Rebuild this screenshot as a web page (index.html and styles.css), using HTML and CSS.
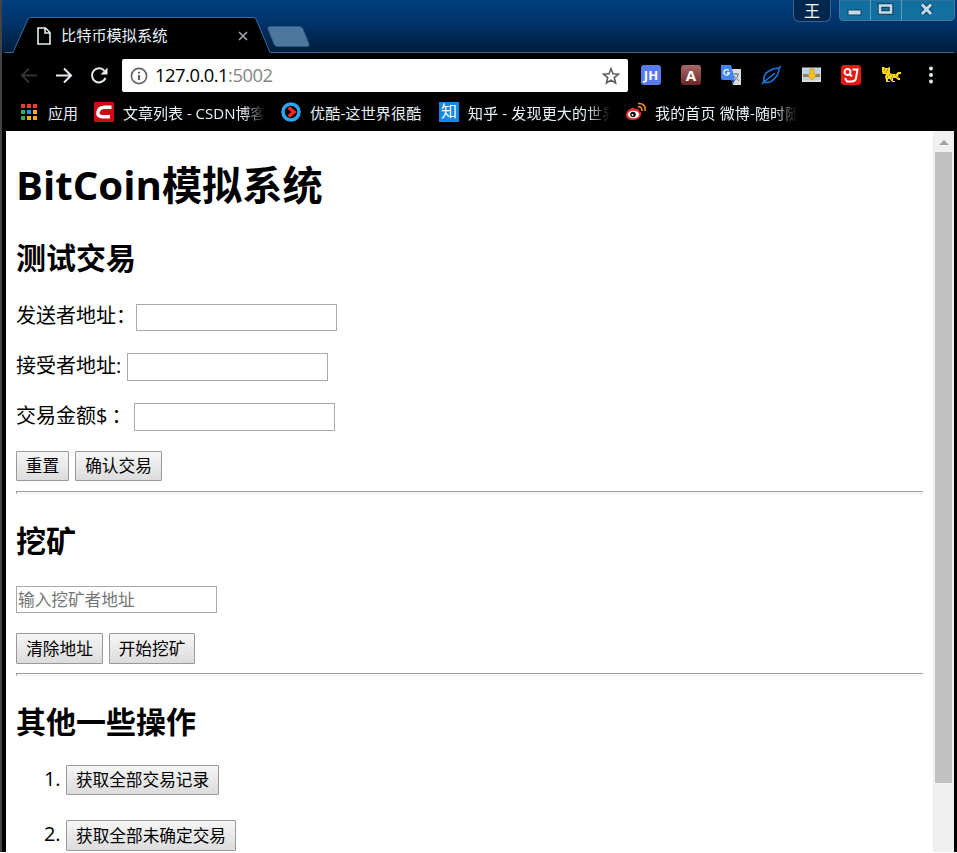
FILE: index.html
```html
<!DOCTYPE html>
<html lang="zh-CN">
<head>
<meta charset="utf-8">
<title>比特币模拟系统</title>
<link rel="stylesheet" href="styles.css">
</head>
<body>
<div class="window">
  <header class="titlebar">
    <svg class="tab-shape" width="320" height="53" viewBox="0 0 320 53">
      <path d="M5 52.5H13L28 19Q29 17.500 31 17.500H253Q255 17.500 256 19L270 52.500H320" fill="none" stroke="#3f6b98"/>
      <path d="M13.500 53L28.500 19.500Q29.500 18 31 18H253Q254.500 18 255.500 19.500L269.500 53Z" fill="#000"/>
      <path d="M270 26.500H299Q302 26.500 303 29L309 44Q310 46.500 307 46.500H278Q275 46.500 274 44L268 29Q267 26.500 270 26.500Z" fill="#4c779f" stroke="#2c5986"/>
    </svg>
    <div class="tab">
      <svg class="doc" width="14" height="18" viewBox="0 0 14 18" fill="none" stroke="#e4eef0" stroke-width="1.600"><path d="M1 1H8.500L13 5.500V17H1ZM8 1V6H13"/></svg>
      <span class="tab-title">比特币模拟系统</span>
      <svg class="tab-close" width="10" height="10" viewBox="0 0 10 10" stroke="#a5b0b5" stroke-width="1.500"><path d="M1 1L9 9M9 1L1 9"/></svg>
    </div>
    <div class="user">王</div>
    <div class="controls">
      <svg width="116" height="22" viewBox="0 0 116 22">
        <path d="M.5 0V17Q.5 20.500 4 20.500H111Q115.500 20.500 115.500 16V0Z" fill="#126fa0" stroke="#49789b"/>
        <path d="M31.500 0V20M62.500 0V20" stroke="#5c9cbd"/>
        <rect x="9" y="10" width="13" height="5" fill="#c3dbe8" stroke="#154663"/>
        <path d="M41 5.500H52V12.500H41Z" fill="none" stroke="#154663" stroke-width="5"/>
        <path d="M41 5.500H52V12.500H41Z" fill="none" stroke="#c3dbe8" stroke-width="2.500"/>
        <path d="M83 4.500L92 14M92 4.500L83 14" stroke="#154663" stroke-width="5"/>
        <path d="M83 4.500L92 14M92 4.500L83 14" stroke="#c3dbe8" stroke-width="3"/>
      </svg>
    </div>
  </header>

  <nav class="toolbar">
    <svg class="nav" width="110" height="40" viewBox="0 0 110 40" fill="none" stroke-width="2">
      <path d="M37 22.500H22M29 15.500L22 22.500L29 29.500" stroke="#333"/>
      <path d="M56 22.500H71M64 15.500L71 22.500L64 29.500" stroke="#e4eef0"/>
      <path d="M104.500 18A7 7 0 1 0 105.500 25" stroke="#e4eef0"/>
      <path d="M107.500 14.500V21.500H100.500Z" fill="#e4eef0"/>
    </svg>
    <div class="address">
      <svg width="18" height="18" viewBox="0 0 18 18" fill="none" stroke="#5f6266" stroke-width="1.600"><circle cx="9" cy="9" r="7.600"/><path d="M9 8V13M9 4.700V6.500" stroke-width="2"/></svg>
      <span class="url">127.0.0.1<span class="port">:5002</span></span>
      <svg class="star" width="18" height="18" viewBox="0 0 18 18" fill="none" stroke="#5b5e61" stroke-width="1.600"><path d="M9 1.800L11 6.700L16.500 7.100L12.300 10.600L13.600 16L9 13.100L4.400 16L5.700 10.600L1.500 7.100L7 6.700Z"/></svg>
    </div>
    <div class="extensions">
      <span class="ext jh">JH</span>
      <span class="ext acro">A</span>
      <svg width="20" height="20" viewBox="0 0 20 20"><path d="M8 4H20V20H12Z" fill="#ddd"/><path d="M12 9H18M15 8V10M13 16Q17 13 17 9M13 11L18 16" stroke="#697a84" fill="none"/><path d="M0 0H10L14 15H2Q0 15 0 13Z" fill="#4285f4"/><path d="M10 15H14L12 19Z" fill="#2455b5"/><path d="M7.700 5.700A2.700 2.700 0 1 0 8.200 8H6" fill="none" stroke="#fff" stroke-width="1.300"/></svg>
      <svg width="20" height="20" viewBox="0 0 20 20" fill="none" stroke="#197ce4" stroke-width="1.500"><path d="M3 17Q2 9 8 6Q13 3 18 3Q18 9 14 13Q9 19 3 17M1 18.500L14 8M17 4L20 1M3 17L1 19"/></svg>
      <svg width="20" height="20" viewBox="0 0 20 20"><path d="M1 2.500H20V17H1Z" fill="#ddd"/><path d="M2 3.500H19V10H2Z" fill="#b6d4e4"/><path d="M2 9H19V12H2Z" fill="#8b806b"/><path d="M2 12H19V15H2Z" fill="#c6d1cc"/><path d="M9 4H13V9H16L11 15L6 9H9Z" fill="#f5c51c" stroke="#c18d18" stroke-width=".6"/></svg>
      <svg width="20" height="20" viewBox="0 0 20 20"><rect width="20" height="20" rx="3" fill="#e41912"/><g fill="none" stroke="#fff" stroke-width="1.900"><circle cx="6.500" cy="7" r="3"/><path d="M8.500 9L11 11.500M11.500 4.500H16.500L15 13Q14.500 16.500 10 16.500H6L4 13"/></g></svg>
      <svg width="20" height="20" viewBox="0 0 20 20"><path d="M1 2H3L4 3H7L8 2H9V8L11 9H15L17 7H20V9H18L17 11L18 13H19V15H17L15 13H12V16H14V17H11L9 14H7V16H9V17H5V15L4 12L5 9L2 9L1 7Z" fill="#f8d91b"/><path d="M3 5H4M6 5H7M5 7H6M8 10H9M11 11H12M14 10H15M6 12H7M10 13H11M16 12H17" stroke="#704600"/></svg>
      <svg width="20" height="20" viewBox="0 0 20 20" fill="#e4eef0"><circle cx="10" cy="3.500" r="2"/><circle cx="10" cy="10" r="2"/><circle cx="10" cy="16.500" r="2"/></svg>
    </div>
  </nav>

  <nav class="bookmarks">
    <div class="bm apps">
      <svg width="17" height="17" viewBox="0 0 17 17"><path d="M0 0H4V4H0ZM6 0H10V4H6ZM12 0H16V4H12Z" fill="#f23b30"/><path d="M0 6H4V10H0ZM0 12H4V16H0Z" fill="#35a853"/><path d="M6 6H10V10H6Z" fill="#2b8cff"/><path d="M12 6H16V10H12ZM6 12H10V16H6ZM12 12H16V16H12Z" fill="#fbad18"/></svg>
      <span>应用</span>
    </div>
    <div class="bm csdn">
      <svg width="20" height="20" viewBox="0 0 20 20"><path d="M0 0H20V20H0Z" fill="#ca0c16"/><path d="M17.500 5.200H11Q5 5.200 4 10Q3 14.800 9 14.800H16" fill="none" stroke="#fff" stroke-width="3.400"/></svg>
      <span class="fade">文章列表 - CSDN博客</span>
    </div>
    <div class="bm youku">
      <svg width="20" height="20" viewBox="0 0 20 20" fill="none"><circle cx="10" cy="10" r="8" stroke="#2aa7f2" stroke-width="3.500"/><path d="M7.500 5.500L13 10L7.500 14.500" stroke="#fb2424" stroke-width="3.500"/></svg>
      <span>优酷-这世界很酷</span>
    </div>
    <div class="bm zhihu">
      <span class="zhi">知</span>
      <span class="fade">知乎 - 发现更大的世界</span>
    </div>
    <div class="bm weibo">
      <svg width="20" height="20" viewBox="0 0 20 20"><path d="M0 13Q0 8 6 6Q9 5 9 7Q13 6 13 9Q16 10 15 13Q13 18 7 18Q0 18 0 13Z" fill="#e52b30"/><ellipse cx="7.500" cy="12.500" rx="5.600" ry="3.800" fill="#fff"/><circle cx="7" cy="12.500" r="2.800" fill="#111"/><circle cx="6.500" cy="13" r=".9" fill="#fff"/><path d="M12 5Q16 4 16 9M12 1.500Q20 1 19 9" fill="none" stroke="#f7931e" stroke-width="1.500"/></svg>
      <span class="fade">我的首页 微博-随时随</span>
    </div>
  </nav>

  <div class="viewport">
    <main class="page">
      <h1>BitCoin模拟系统</h1>
      <h2>测试交易</h2>
      <form>
        <div class="row"><label class="sender" for="s">发送者地址：</label><input id="s" type="text"></div>
        <div class="row"><label class="receiver" for="r">接受者地址:</label><input id="r" type="text"></div>
        <div class="row"><label class="amount" for="a">交易金额$<span class="colon">：</span></label><input id="a" type="text"></div>
        <div class="actions"><button class="w2" type="button">重置</button><button class="w4" type="button">确认交易</button></div>
      </form>
      <hr>
      <h2 class="mining">挖矿</h2>
      <form>
        <div class="row miner"><input type="text" placeholder="输入挖矿者地址"></div>
        <div class="actions mine-actions"><button class="w4" type="button">清除地址</button><button class="w4b" type="button">开始挖矿</button></div>
      </form>
      <hr>
      <h2 class="others">其他一些操作</h2>
      <ol>
        <li><span class="num">1.</span><button class="w8" type="button">获取全部交易记录</button></li>
        <li><span class="num">2.</span><button class="w9" type="button">获取全部未确定交易</button></li>
      </ol>
    </main>
    <div class="scrollbar"><div class="arrow"></div><div class="thumb"></div></div>
  </div>
</div>
</body>
</html>
```
FILE: styles.css
```css
* { box-sizing: border-box; }
body { margin: 0; overflow: hidden; font-family: "Open Sans", "Noto Sans CJK SC", sans-serif; }
svg { display: block; flex: none; }
.window { width: 957px; height: 852px; background: #000; border-left: 2px solid #444; overflow: hidden; }
.titlebar { position: relative; display: flex; height: 53px; background: linear-gradient(#003f80, #003368 45%, #001c3b); }
.tab-shape { position: absolute; left: -2px; top: 0; }
.titlebar::after { content: ""; position: absolute; left: 318px; right: 3px; bottom: 0; height: 1px; background: #3f6589; }
.tab { position: relative; display: flex; align-items: center; width: 252px; height: 34px; margin-top: 19px; padding-left: 35px; color: #e9f4f8; }
.tab-title { margin-left: 10px; padding-bottom: 2px; font-size: 15.2px; line-height: 32px; }
.tab-close { margin-left: auto; margin-right: 6px; }
.user { width: 38px; height: 22px; margin-left: 539px; border: 1px solid #3a628c; border-top: 0; border-radius: 0 0 6px 6px; background: #00274f; color: #fff; font-size: 16px; line-height: 22px; text-align: center; }
.controls { margin-left: 8px; }
.toolbar { display: flex; height: 43px; }
.nav { margin-left: -2px; }
.address { display: flex; align-items: center; width: 506px; height: 33px; margin: 6px 0 0 12px; padding: 0 8px; background: #fff; border-radius: 2px; }
.url { margin-left: 7px; padding-bottom: 2px; font-size: 18.4px; line-height: 30px; letter-spacing: -.5px; }
.port { color: #858585; }
.star { margin-left: auto; }
.extensions { display: flex; gap: 20px; margin: 12px 0 0 13px; }
.ext { width: 20px; height: 20px; border-radius: 3px; color: #fff; text-align: center; line-height: 20px; font-weight: 700; }
.jh { background: #587bed; font-size: 13px; }
.acro { background: linear-gradient(#a76b6b, #6e2525); font-size: 15px; }
.bookmarks { display: flex; align-items: center; height: 35px; padding-bottom: 3px; color: #e9f4f8; font-size: 15px; line-height: 26px; white-space: nowrap; }
.bm { display: flex; align-items: center; flex: none; }
.bm > span:not(.zhi) { padding-top: 1px; }
.apps { width: 92px; padding-left: 19px; gap: 10px; }
.csdn { width: 187px; gap: 9px; }
.youku { width: 158px; gap: 9px; letter-spacing: .2px; }
.zhihu { width: 187px; gap: 9px; }
.weibo { gap: 9px; }
.zhihu .fade, .weibo .fade { letter-spacing: .15px; }
.fade { width: 142px; overflow: hidden; -webkit-mask-image: linear-gradient(to right, #000 84%, transparent); mask-image: linear-gradient(to right, #000 84%, transparent); }
.zhi { width: 20px; height: 20px; background: #0f88eb; color: #fff; line-height: 19px; text-align: center; font-size: 16px; }
.viewport { display: flex; width: 948px; height: 721px; margin-left: 4px; background: #fff; }
.page { width: 927px; height: 721px; padding: 0 10px; font-size: 20px; overflow: hidden; }
h1 { margin: 28px 0 0; font-size: 40.2px; line-height: 52px; height: 52px; font-weight: 700; }
h2 { margin: 27px 0 0; font-size: 30px; line-height: 40px; height: 40px; font-weight: 700; }
form { margin: 0; }
.row { display: flex; height: 28px; margin-bottom: 22px; align-items: flex-start; }
h2 + form { padding-top: 26px; }
label { line-height: 24px; white-space: nowrap; }
.sender { width: 120px; }
.receiver { width: 111px; line-height: 26px; }
.amount { width: 118px; line-height: 26px; }
.colon { margin-left: 4px; }
input { width: 201px; height: 27px; margin: 0; border: 1px solid #a9a9a9; padding: 1px; background: #fff; border-radius: 0; font: 16.67px/22px "Open Sans", "Noto Sans CJK SC", sans-serif; }
input::placeholder { color: #757575; }
.row:nth-child(2) input, .row:nth-child(3) input { height: 28px; }
.row:nth-child(2) { margin-top: -1px; }
.actions { display: flex; gap: 6px; height: 30px; margin-top: -2px; }
button { height: 30px; padding: 0; border: 1px solid #999; border-radius: 1px; background: linear-gradient(#f6f6f6, #dcdcdc); color: #000; font: 16.67px/26px "Open Sans", "Noto Sans CJK SC", sans-serif; white-space: nowrap; }
.w2 { width: 53px; } .w4 { width: 87px; } .w4b { width: 86px; } .w8 { width: 153px; } .w9 { width: 170px; }
hr { width: 907px; height: 3px; margin: 10px 0 0; border: 1px solid #eee; border-top-color: #999; border-left-color: #999; }
.mining + form { padding-top: 25px; }
.miner { margin-bottom: 21px; }
.mine-actions button { height: 31px; }
.others { margin-top: 26px; }
ol { margin: 23px 0 0; padding: 0; list-style: none; }
li { display: flex; height: 30px; margin-bottom: 25px; }
li + li button { height: 31px; }
.num { width: 50px; padding-right: 6px; text-align: right; line-height: 27px; font-size: 20px; letter-spacing: -.4px; }
.scrollbar { width: 21px; height: 721px; padding-top: 9px; background: #f0f0f0; }
.arrow { width: 0; height: 0; margin-left: 6px; border: 5px solid transparent; border-top: 0; border-bottom-color: #a3a3a3; }
.thumb { width: 17px; height: 631px; margin: 7px 0 0 2px; background: #c1c1c1; }
```
